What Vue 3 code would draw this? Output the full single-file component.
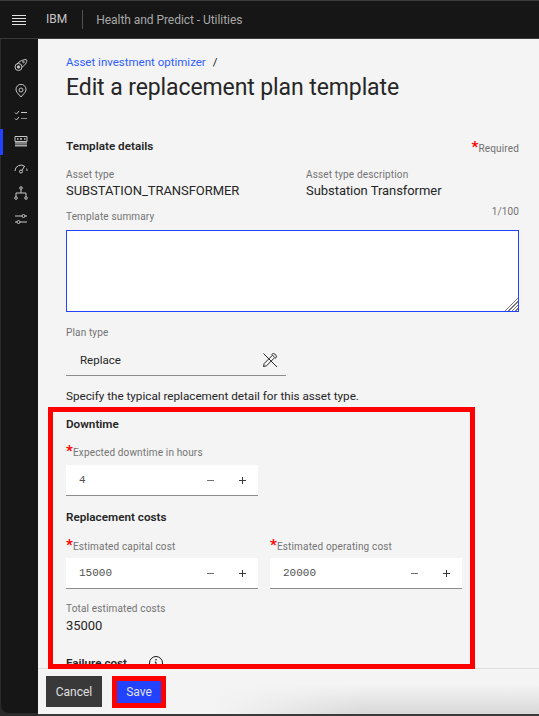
<template>
  <div class="shell">
    <header class="top">
      <svg class="burger" width="14" height="10" viewBox="0 0 14 10"><path d="M0 .5h14M0 3.5h14M0 6.5h14M0 9.5h14" stroke="#e0e0e0" fill="none" /></svg>
      <span class="brand">IBM</span>
      <span class="app">Health and Predict - Utilities</span>
    </header>
    <div class="body">
      <nav class="side">
        <div v-for="(n, i) in navIcons" :key="i" :class="['nav', { on: i === 3 }]">
          <svg width="14" height="14" viewBox="0 0 14 14" fill="none" stroke="#c6c6c6" stroke-width="1" v-html="n"></svg>
        </div>
      </nav>
      <main class="main">
        <div class="scroll">
          <div class="crumb"><a>Asset investment optimizer</a><span>/</span></div>
          <h1>Edit a replacement plan template</h1>

          <div class="head-row">
            <h2>Template details</h2>
            <span class="req"><i>*</i>Required</span>
          </div>

          <div class="two">
            <div>
              <div class="lab">Asset type</div>
              <div class="val">SUBSTATION_TRANSFORMER</div>
            </div>
            <div>
              <div class="lab">Asset type description</div>
              <div class="val">Substation Transformer</div>
            </div>
          </div>

          <div class="sum-row">
            <span class="lab">Template summary</span>
            <span class="lab count">1/100</span>
          </div>
          <textarea class="area"></textarea>

          <div class="lab plan-lab">Plan type</div>
          <div class="plan">
            <span>Replace</span>
            <svg width="16" height="16" viewBox="0 0 16 16" fill="none" stroke="#262626"><path d="M1.5 1.5L15 15" /><path d="M1.5 14.5l.7-3L10.5 3.2l2.3 2.3-8.3 8.3zM9.5 2.5a1.8 1.8 0 0 1 4 4" /></svg>
          </div>
          <p class="hint">Specify the typical replacement detail for this asset type.</p>

          <h2 class="down">Downtime</h2>
          <div class="lab star"><i>*</i>Expected downtime in hours</div>
          <div class="num-row">
            <div class="num"><span class="n">4</span><span class="b minus"></span><span class="b plus"></span></div>
          </div>

          <h2 class="repl">Replacement costs</h2>
          <div class="num-row cols">
            <div v-for="c in costs" :key="c.label">
              <div class="lab star"><i>*</i>{{ c.label }}</div>
              <div class="num"><span class="n">{{ c.value }}</span><span class="b minus"></span><span class="b plus"></span></div>
            </div>
          </div>

          <div class="lab total-lab">Total estimated costs</div>
          <div class="val total">{{ total }}</div>

          <div class="fail">
            <h2>Failure cost</h2>
            <svg width="16" height="16" viewBox="0 0 16 16" fill="none" stroke="#161616"><circle cx="8" cy="8" r="6.5" /><path d="M8 7v4.5M6.5 11.5h3M6.8 7H8" /><circle cx="8" cy="4.8" r=".8" fill="#161616" stroke="none" /></svg>
          </div>
        </div>

        <footer class="foot">
          <button class="btn cancel">Cancel</button>
          <button class="btn save">Save</button>
        </footer>
        <div class="mark-form"></div>
      </main>
    </div>
  </div>
</template>

<script setup>
import { computed } from 'vue'

const costs = [
  { label: 'Estimated capital cost', value: 15000 },
  { label: 'Estimated operating cost', value: 20000 }
]

const total = computed(() => costs.reduce((sum, c) => sum + c.value, 0))

const navIcons = [
  '<circle cx="4.5" cy="9" r="3.5"/><circle cx="4.5" cy="9" r="1.2" fill="#c6c6c6"/><path d="M3 5.8C5 3.5 9 1.5 12 1.5c1.2 0 1 2.5-.5 4.5-1 1.3-2.5 2.5-3.7 3.3"/><circle cx="9.5" cy="4" r=".8"/>',
  '<path d="M7 13L3.2 8.6A5 5 0 1 1 10.8 8.6z"/><circle cx="7" cy="6" r="2"/>',
  '<path d="M1 3.5l1.5 1.5L5 2M7 3.5h6M1 9.5L2.5 11 5 8"/><path d="M7 9.5h6" stroke="#8d8d8d"/>',
  '<path d="M1 1.5h12v5H1z"/><path d="M3 4h1.5M6 4h2M10 4h1.5" stroke-width="1.6"/><path d="M1 8h12" stroke-width="1.2"/><path d="M1 10.5h12" stroke-width="2" stroke="#a8a8a8"/>',
  '<path d="M1 10a6 6 0 0 1 10-4.4M12.6 7.5A6 6 0 0 1 13 10"/><circle cx="7" cy="10.5" r="1.5"/><path d="M8 9.5L10.5 5"/>',
  '<circle cx="7" cy="2" r="1.3"/><circle cx="2" cy="12" r="1.3"/><circle cx="12" cy="12" r="1.3"/><path d="M7 3.3V7M2 10.7V7h10v3.7"/>',
  '<path d="M1 4h7M11 4h2M1 10h2M6 10h7"/><circle cx="9.5" cy="4" r="1.5"/><circle cx="4.5" cy="10" r="1.5"/>'
]
</script>

<style>
html, body {
  margin: 0;
  background: #2a2a2a;
}
</style>

<style scoped>
.shell {
  width: 539px;
  height: 716px;
  overflow: hidden;
  display: flex;
  flex-direction: column;
  font-family: Roboto, "Noto Sans", sans-serif;
  color: #161616;
  background: #2a2a2a;
}
.top {
  height: 39px;
  flex: none;
  display: flex;
  align-items: center;
  box-sizing: border-box;
  border-top: 1px solid #3a3a3a;
  border-bottom: 1px solid #393939;
  background: #161616;
  color: #c6c6c6;
  font-size: 12px;
}
.burger {
  margin-left: 12px;
}
.brand {
  margin-left: 20px;
  padding-right: 15px;
  border-right: 1px solid #525252;
  line-height: 19px;
}
.app {
  margin-left: 13px;
  letter-spacing: -.05px;
  color: #a8a8a8;
}
.body {
  flex: 1;
  display: flex;
  min-height: 0;
}
.side {
  width: 38px;
  flex: none;
  margin-bottom: 3px;
  padding-top: 13px;
  box-sizing: border-box;
  border-left: 1px solid #2a2a2a;
  border-bottom-left-radius: 8px;
  background: #161616;
}
.nav {
  height: 25.7px;
  display: flex;
  align-items: center;
  justify-content: center;
  margin-left: -1px;
  border-left: 3px solid transparent;
  box-sizing: border-box;
}
.nav.on {
  border-left-color: #2142ff;
}
.main {
  flex: 1;
  min-width: 0;
  position: relative;
  display: flex;
  flex-direction: column;
  background: #f4f4f4;
}
.scroll {
  flex: 1;
  min-height: 0;
  overflow: hidden;
  padding: 16px 20px 0 28px;
}
.crumb {
  display: flex;
  gap: 7px;
  font-size: 11.5px;
  line-height: 14px;
}
.crumb a {
  color: #2f5dff;
}
h1 {
  margin: 3px 0 0;
  font-size: 23px;
  line-height: 32px;
  font-weight: 400;
  letter-spacing: -.1px;
  color: #262626;
}
h2 {
  margin: 0;
  font-size: 11.7px;
  line-height: 16px;
  font-weight: 600;
  color: #262626;
}
.head-row {
  display: flex;
  justify-content: space-between;
  align-items: flex-end;
  margin-top: 34px;
}
.req {
  font-size: 10px;
  color: #6f6f6f;
  letter-spacing: .15px;
}
i {
  font-style: normal;
  font-weight: 700;
  color: #f00;
  font-size: 15px;
  line-height: 10px;
}
.two {
  display: grid;
  grid-template-columns: 240px 1fr;
  margin-top: 14px;
}
.lab {
  font-size: 10px;
  line-height: 14px;
  color: #737373;
  letter-spacing: .15px;
}
.val {
  font-size: 13px;
  line-height: 18px;
  letter-spacing: -.05px;
  color: #262626;
}
.sum-row {
  display: flex;
  justify-content: space-between;
  margin-top: 10px;
}
.count {
  margin-top: -5px;
}
.area {
  display: block;
  width: 100%;
  height: 82px;
  margin-top: 6px;
  box-sizing: border-box;
  border: 1px solid #2142ff;
  background: #fff;
  outline: none;
  border-radius: 0;
  padding: 0;
}
.area::-webkit-resizer {
  background:
    linear-gradient(135deg, #fff 50%, transparent 50%),
    repeating-linear-gradient(135deg, transparent 0 1.5px, #777 1.5px 2.5px);
}
.plan-lab {
  margin-top: 14px;
}
.plan {
  width: 220px;
  height: 32px;
  margin-top: 4px;
  padding: 0 8px 0 14px;
  box-sizing: border-box;
  display: flex;
  align-items: center;
  justify-content: space-between;
  border-bottom: 1px solid #8d8d8d;
  font-size: 11.5px;
  color: #262626;
}
.hint {
  margin: 13px 0 0;
  font-size: 11.7px;
  line-height: 14px;
  color: #262626;
}
.down {
  margin-top: 13px;
}
.star {
  margin-top: 14px;
  height: 14px;
}
.num {
  width: 192px;
  height: 31px;
  box-sizing: border-box;
  background: #fff;
  border-bottom: 1px solid #8d8d8d;
  display: flex;
  align-items: center;
  font-size: 11px;
  color: #525252;
  font-family: "Liberation Mono", monospace;
}
.num-row > .num {
  margin-top: 5px;
}
.cols .num {
  margin-top: 4px;
}
.n {
  flex: 1;
  padding-left: 13px;
}
.b {
  width: 32px;
  height: 100%;
  position: relative;
}
.b::before {
  content: '';
  position: absolute;
  left: 13px;
  top: 15px;
  width: 7px;
  height: 1px;
  background: #6f6f6f;
}
.plus::before {
  background: #393939;
}
.plus::after {
  content: '';
  position: absolute;
  left: 16px;
  top: 12px;
  width: 1px;
  height: 7px;
  background: #393939;
}
.repl {
  margin-top: 13px;
}
.cols {
  display: grid;
  grid-template-columns: 192px 192px;
  column-gap: 12px;
}
.cols .star {
  margin-top: 15px;
}
.total-lab {
  margin-top: 13px;
}
.total {
  margin-top: 1px;
}
.fail {
  display: flex;
  align-items: center;
  gap: 21px;
  margin-top: 20px;
}
.foot {
  flex: none;
  height: 48px;
  box-sizing: border-box;
  border-top: 1px solid #e0e0e0;
  border-bottom: 2px solid #3a3a3a;
  padding: 7px 0 0 8px;
  display: flex;
  align-items: flex-start;
  gap: 15px;
  background:
    linear-gradient(to right, #f4f4f4 35%, transparent 65%),
    linear-gradient(#f4f4f4 35%, #d8d8d8);
}
.btn {
  height: 31px;
  border: 0;
  border-radius: 0;
  padding: 0;
  color: #e0e0e0;
  font: 12px Roboto, sans-serif;
}
.cancel {
  width: 56px;
  background: #393939;
}
.save {
  width: 44px;
  height: 22px;
  margin-top: 5px;
  background: #2142ff;
  outline: 5px solid #f00;
}
.mark-form {
  position: absolute;
  left: 10px;
  top: 368px;
  width: 427px;
  height: 262px;
  box-sizing: border-box;
  border: 5px solid #f00;
  pointer-events: none;
}
</style>
